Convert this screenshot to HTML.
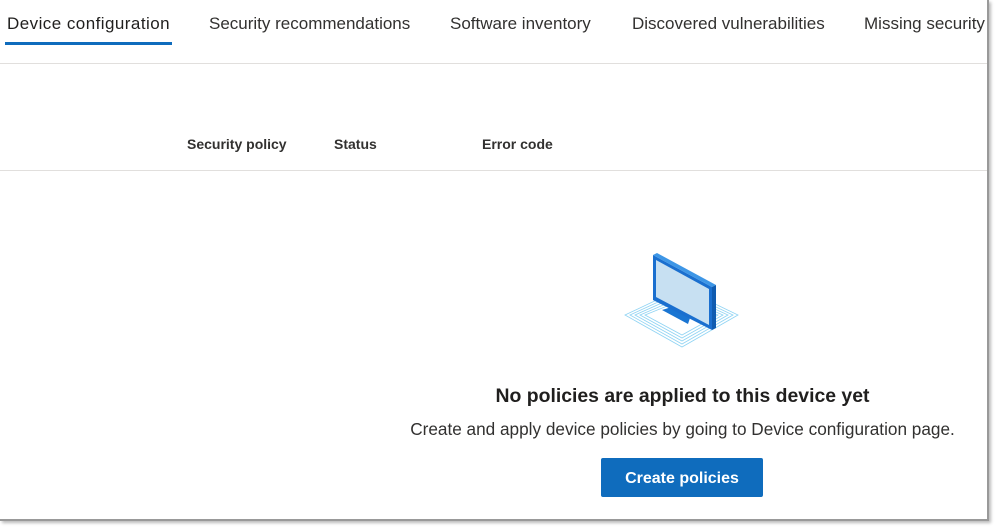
<!DOCTYPE html>
<html><head><meta charset="utf-8"><style>
html,body{margin:0;padding:0;background:#fff;width:999px;height:530px;overflow:hidden}
body{font-family:"Liberation Sans",Arial,sans-serif;color:#323130;position:relative}
.t{position:absolute;top:14px;font-size:17px;color:#323130;white-space:nowrap}
.frame{position:absolute;left:0;top:0;width:987px;height:519px;border-right:2px solid #999;border-bottom:2px solid #999;box-shadow:2px 2px 3px #bbb;overflow:hidden}
.h{position:absolute;top:136px;font-size:14px;font-weight:bold;color:#323130}
</style></head><body>
<div class="frame">
<div class="t" style="left:7px;color:#201f1e;letter-spacing:0.45px">Device configuration</div>
<div style="position:absolute;left:5px;top:42px;width:167px;height:3px;background:#0f6cbd"></div>
<div class="t" style="left:209px">Security recommendations</div>
<div class="t" style="left:450px">Software inventory</div>
<div class="t" style="left:632px">Discovered vulnerabilities</div>
<div class="t" style="left:864px">Missing security</div>
<div style="position:absolute;left:0;top:63px;width:990px;height:1px;background:#e1dfdd"></div>
<div class="h" style="left:187px">Security policy</div>
<div class="h" style="left:334px">Status</div>
<div class="h" style="left:482px">Error code</div>
<div style="position:absolute;left:0;top:170px;width:990px;height:1px;background:#e1dfdd"></div>
<svg style="position:absolute;left:0;top:0" width="999" height="530">
<g fill="none" stroke="#8fd3f3" stroke-width="0.8">
<polygon points="625,315 682,288 738,315 682,347"/>
<polygon points="630,315 682,291 733,315 682,344"/>
<polygon points="635,315 682,294 728,315 682,341"/>
<polygon points="640,315 682,297 723,315 682,338"/>
<polygon points="645,315 682,300 718,315 682,335"/>
</g>
<polygon points="662,310 678,305 690,318 688,324" fill="#1a75d2"/>
<polygon points="653,255 712,287 712,330 653,300" fill="#1a6fcf"/>
<polygon points="653,255 657,253 716,285 712,287" fill="#3d96e6"/>
<polygon points="712,287 716,285 716,328 712,330" fill="#0f5bb0"/>
<polygon points="656,260 709,289 709,325 656,297" fill="#c7e0f2"/>
</svg>
<div style="position:absolute;left:380px;top:385px;width:605px;text-align:center;font-size:19.4px;font-weight:bold;color:#201f1e">No policies are applied to this device yet</div>
<div style="position:absolute;left:380px;top:419px;width:605px;text-align:center;font-size:17.2px;color:#323130">Create and apply device policies by going to Device configuration page.</div>
<div style="position:absolute;left:601px;top:458px;width:162px;height:39px;background:#0f6cbd;border-radius:2px;color:#fff;font-size:16px;font-weight:bold;text-align:center;line-height:41px">Create policies</div>
</div>
</body></html>
